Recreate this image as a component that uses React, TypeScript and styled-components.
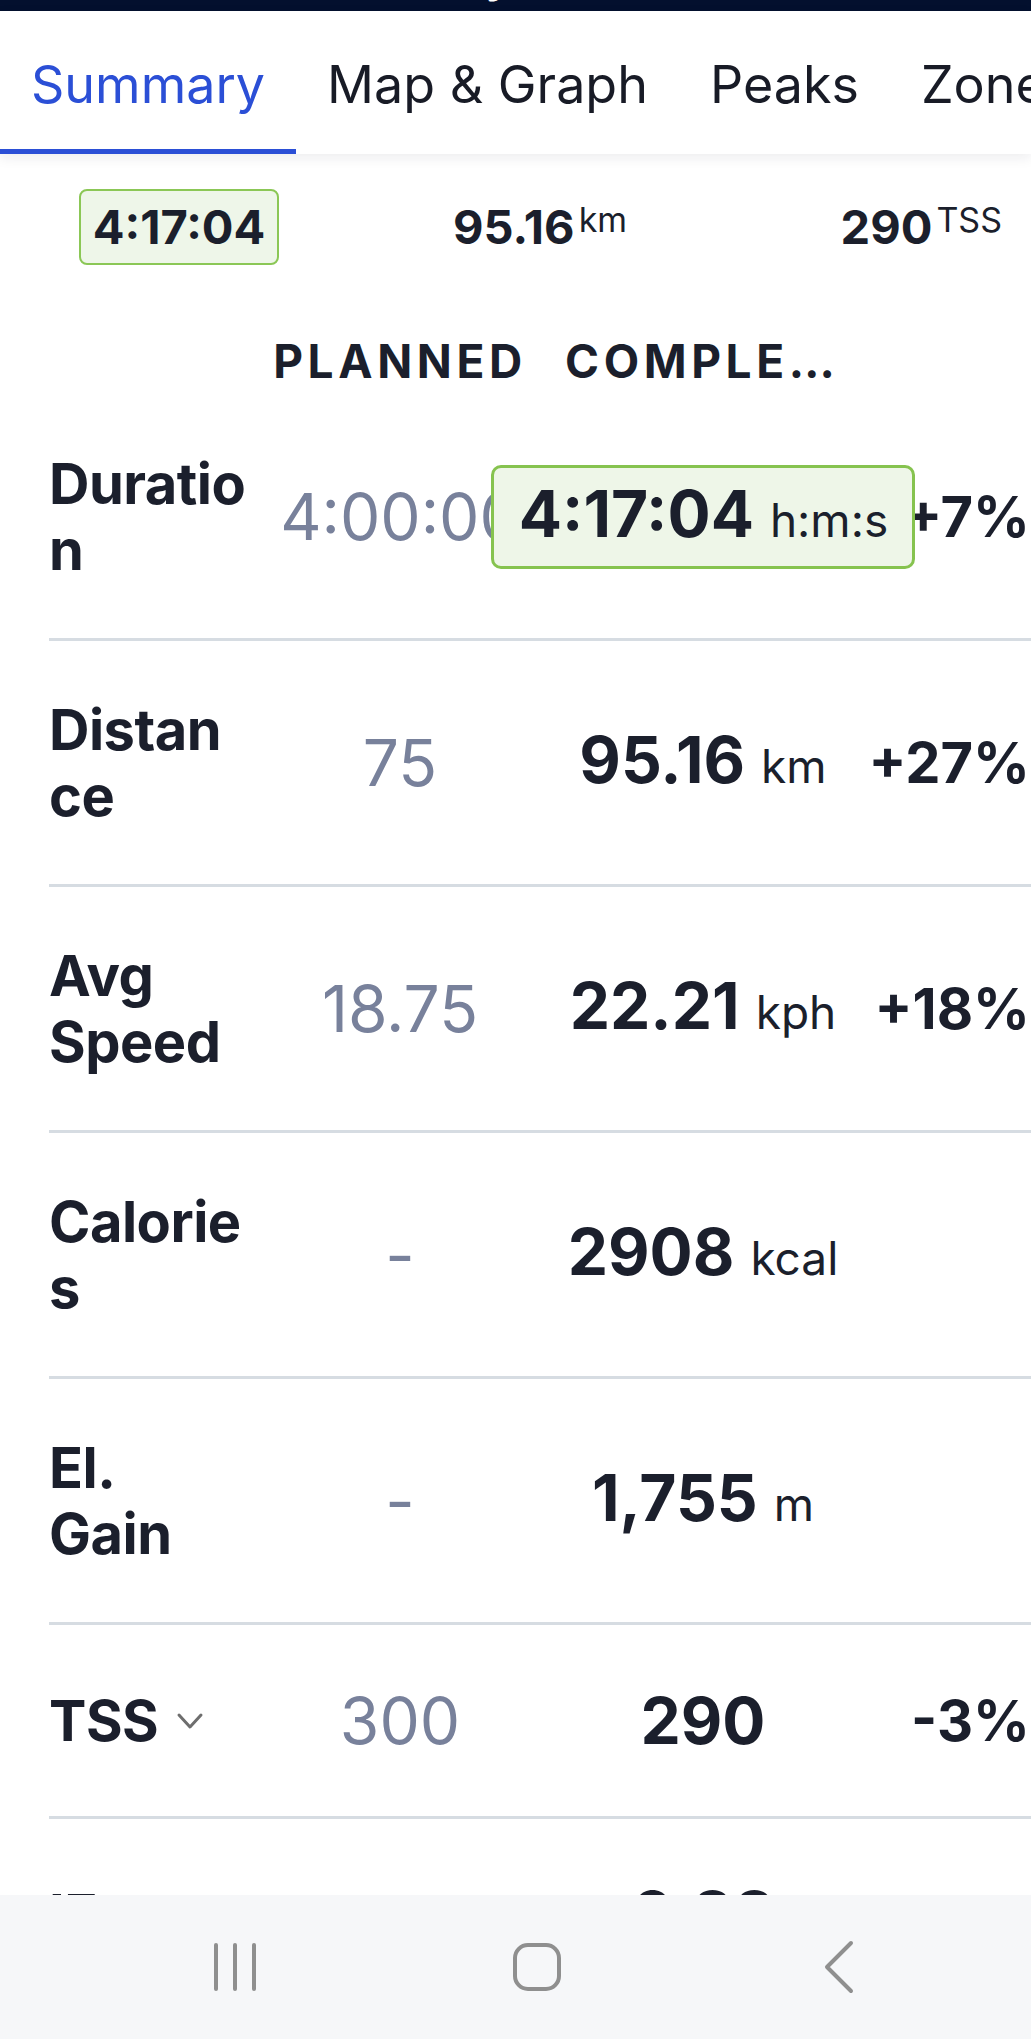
import React from "react";
import styled, { createGlobalStyle } from "styled-components";

const GlobalStyle = createGlobalStyle`
  html, body { margin: 0; padding: 0; background: #ffffff; }
  body { font-family: Inter, "Noto Sans", sans-serif; color: #1b1f2c; }
  * { box-sizing: border-box; }
`;

const Screen = styled.div`
  width: 1031px;
  height: 2039px;
  display: flex;
  flex-direction: column;
  overflow: hidden;
  background: #ffffff;
`;

const Content = styled.div`
  flex: 1;
  min-height: 0;
  overflow: hidden;
  display: flex;
  flex-direction: column;
`;

const TopBar = styled.div`
  height: 11px;
  flex-shrink: 0;
  background: #03102e;
  overflow: hidden;
`;

const TopTitle = styled.div`
  margin-top: -41px;
  padding-left: 358px;
  font-size: 40px;
  line-height: 40px;
  font-weight: 700;
  color: #ffffff;
  white-space: nowrap;
`;

const TabBar = styled.div`
  display: flex;
  flex-shrink: 0;
  background: #ffffff;
  box-shadow: 0 4px 12px rgba(20, 30, 50, 0.08);
  position: relative;
  z-index: 2;
  overflow: hidden;
`;

const Tab = styled.div<{ $active?: boolean }>`
  flex-shrink: 0;
  padding: 43px 31px 33px;
  font-size: 52px;
  line-height: 62px;
  white-space: nowrap;
  color: ${(p) => (p.$active ? "#2b4fd6" : "#181b26")};
  border-bottom: 5px solid ${(p) => (p.$active ? "#2b4fd6" : "transparent")};
`;

const Stats = styled.div`
  display: grid;
  grid-template-columns: 358px 364px 1fr;
  align-items: center;
  justify-items: center;
  padding-top: 35px;
  flex-shrink: 0;
`;

const StatBadge = styled.div`
  border: 2px solid #8bc756;
  background: #eef6e9;
  border-radius: 8px;
  padding: 8px 12px;
  font-size: 47px;
  line-height: 56px;
  font-weight: 700;
  color: #1b1f2c;
`;

const StatValue = styled.div<{ $end?: boolean }>`
  display: flex;
  align-items: flex-start;
  font-size: 47px;
  line-height: 56px;
  font-weight: 700;
  color: #1b1f2c;
  ${(p) => (p.$end ? "justify-self: end; margin-right: 29px;" : "")}
`;

const StatUnit = styled.span`
  font-size: 34px;
  line-height: 34px;
  font-weight: 400;
  margin-left: 4px;
  margin-top: 4px;
`;

const HeaderRow = styled.div`
  display: flex;
  margin: 68px 0 6px 49px;
  flex-shrink: 0;
`;

const HeaderCell = styled.div<{ $w: number; $ml?: number }>`
  width: ${(p) => p.$w}px;
  margin-left: ${(p) => p.$ml ?? 0}px;
  flex-shrink: 0;
  display: flex;
  justify-content: center;
  font-size: 46px;
  line-height: 56px;
  font-weight: 700;
  letter-spacing: 4.6px;
  color: #1b1f2c;
  white-space: nowrap;
`;

const HeaderTruncated = styled.div<{ $w: number; $ml?: number }>`
  width: ${(p) => p.$w}px;
  margin-left: ${(p) => p.$ml ?? 0}px;
  flex-shrink: 0;
  padding: 0 15px;
  font-size: 46px;
  line-height: 56px;
  font-weight: 700;
  letter-spacing: 4.6px;
  color: #1b1f2c;
  white-space: nowrap;
  overflow: hidden;
  text-overflow: ellipsis;
`;

const Row = styled.div`
  display: flex;
  align-items: center;
  margin-left: 49px;
  padding: 55.5px 0;
  border-bottom: 3px solid #d6dce2;
  flex-shrink: 0;
`;

const Label = styled.div`
  width: 226px;
  flex-shrink: 0;
  display: flex;
  align-items: center;
  gap: 18px;
  font-size: 56px;
  line-height: 66px;
  font-weight: 700;
  letter-spacing: -0.5px;
  white-space: pre-line;
  color: #1b1f2c;
`;

const Planned = styled.div`
  width: 250px;
  flex-shrink: 0;
  display: flex;
  justify-content: center;
  font-size: 64px;
  line-height: 80px;
  font-weight: 400;
  color: #78819b;
  white-space: nowrap;
`;

const Completed = styled.div`
  width: 306px;
  margin-left: 25px;
  flex-shrink: 0;
  display: flex;
  justify-content: center;
  white-space: nowrap;
`;

const ValueText = styled.div<{ $boxed?: boolean }>`
  position: relative;
  z-index: 1;
  font-size: 64px;
  line-height: ${(p) => (p.$boxed ? "77px" : "80px")};
  font-weight: 700;
  color: #1b1f2c;
  ${(p) =>
    p.$boxed
      ? `border: 3px solid #86c34f;
         background: #eef6e8;
         border-radius: 10px;
         padding: 7px 24px 7px 25px;`
      : ""}
`;

const Unit = styled.span`
  font-size: 46px;
  font-weight: 400;
  margin-left: 16px;
`;

const Diff = styled.div`
  flex: 1;
  text-align: right;
  padding-right: 1px;
  font-size: 56px;
  line-height: 80px;
  font-weight: 700;
  color: #1b1f2c;
  white-space: nowrap;
`;

const NavBar = styled.div`
  height: 144px;
  flex-shrink: 0;
  background: #f6f7f9;
  display: grid;
  grid-template-columns: repeat(3, 302px);
  padding-left: 84px;
  align-items: center;
  justify-items: center;
`;

const Chevron = () => (
  <svg width="28" height="18" viewBox="0 0 28 18" fill="none">
    <polyline
      points="3,3 14,15 25,3"
      stroke="#6e6e6e"
      strokeWidth="3"
      strokeLinecap="round"
      strokeLinejoin="round"
    />
  </svg>
);

type RowData = {
  label: string;
  planned: string;
  value: string;
  unit?: string;
  diff?: string;
  boxed?: boolean;
  chevron?: boolean;
};

const rows: RowData[] = [
  { label: "Duratio\nn", planned: "4:00:00", value: "4:17:04", unit: "h:m:s", diff: "+7%", boxed: true },
  { label: "Distan\nce", planned: "75", value: "95.16", unit: "km", diff: "+27%" },
  { label: "Avg\nSpeed", planned: "18.75", value: "22.21", unit: "kph", diff: "+18%" },
  { label: "Calorie\ns", planned: "-", value: "2908", unit: "kcal" },
  { label: "El.\nGain", planned: "-", value: "1,755", unit: "m" },
  { label: "TSS", planned: "300", value: "290", diff: "-3%", chevron: true },
  { label: "IF", planned: "-", value: "0.88" },
  { label: "NP", planned: "-", value: "215", unit: "W" },
];

export default function App() {
  return (
    <>
      <GlobalStyle />
      <Screen>
        <TopBar>
          <TopTitle>Activity</TopTitle>
        </TopBar>
        <TabBar>
          <Tab $active>Summary</Tab>
          <Tab>Map &amp; Graph</Tab>
          <Tab>Peaks</Tab>
          <Tab>Zones</Tab>
        </TabBar>
        <Content>
          <Stats>
            <StatBadge>4:17:04</StatBadge>
            <StatValue>
              95.16<StatUnit>km</StatUnit>
            </StatValue>
            <StatValue $end>
              290<StatUnit>TSS</StatUnit>
            </StatValue>
          </Stats>
          <HeaderRow>
            <HeaderCell $w={226} />
            <HeaderCell $w={250}>PLANNED</HeaderCell>
            <HeaderTruncated $w={306} $ml={25}>
              COMPLETED
            </HeaderTruncated>
          </HeaderRow>
          {rows.map((r) => (
            <Row key={r.label}>
              <Label>
                {r.label}
                {r.chevron && <Chevron />}
              </Label>
              <Planned>{r.planned}</Planned>
              <Completed>
                <ValueText $boxed={r.boxed}>
                  {r.value}
                  {r.unit && <Unit>{r.unit}</Unit>}
                </ValueText>
              </Completed>
              <Diff>{r.diff ?? ""}</Diff>
            </Row>
          ))}
        </Content>
        <NavBar>
          <svg width="46" height="50" viewBox="0 0 46 50" fill="none">
            <g stroke="#8f8f8f" strokeWidth="4" strokeLinecap="round">
              <line x1="4" y1="3" x2="4" y2="47" />
              <line x1="23" y1="3" x2="23" y2="47" />
              <line x1="42" y1="3" x2="42" y2="47" />
            </g>
          </svg>
          <svg width="50" height="50" viewBox="0 0 50 50" fill="none">
            <rect x="3" y="3" width="44" height="44" rx="13" stroke="#8f8f8f" strokeWidth="4" />
          </svg>
          <svg width="32" height="54" viewBox="0 0 32 54" fill="none">
            <polyline
              points="28,3 4,27 28,51"
              stroke="#8f8f8f"
              strokeWidth="4"
              strokeLinecap="round"
              strokeLinejoin="round"
            />
          </svg>
        </NavBar>
      </Screen>
    </>
  );
}
